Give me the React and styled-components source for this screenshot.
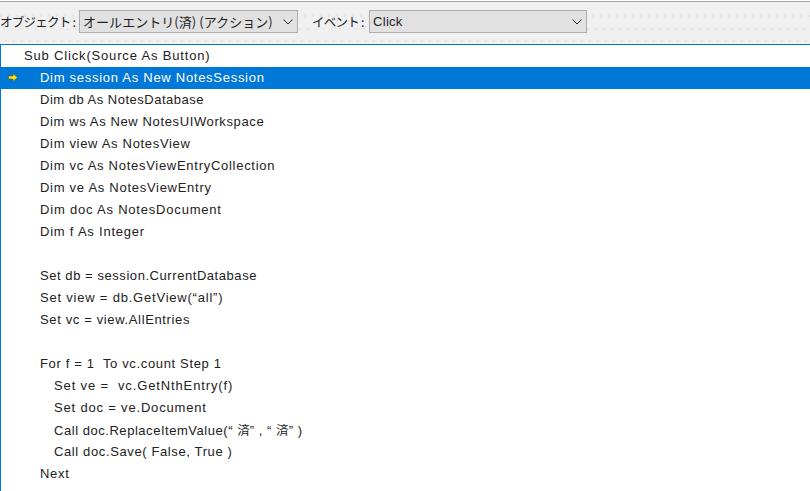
import React from "react";
import styled, { createGlobalStyle } from "styled-components";

const Global = createGlobalStyle`
  html, body { margin: 0; padding: 0; background: #fff; }
  body { width: 810px; height: 491px; overflow: hidden; font-family: "Liberation Sans", "Noto Sans CJK JP", sans-serif; }
`;
const Page = styled.div`
  width: 810px; height: 491px; display: flex; flex-direction: column; overflow: hidden;
  padding-top: 1px; box-sizing: border-box; background: #fff;
`;
const dot = "radial-gradient(circle at 1px 1px, #e4e4e4 0.7px, transparent 1px)";
const Toolbar = styled.div`
  height: 44px; flex: none; box-sizing: border-box; display: flex; align-items: center;
  background-color: #f0f0f0;
  background-image: ${dot}, ${dot}, ${dot};
  background-size: 8px 2px;
  background-repeat: repeat-x;
  background-position: 0 13px, 3px 26px, 5px 38px;
  border-top: 1px solid #a6a6a6; border-bottom: 1px solid #0078d7;
  padding-bottom: 3px; font-size: 13px; color: #222;
`;
const Label = styled.span`
  margin-left: ${p => p.$ml}px; width: ${p => p.$w}px; flex: none; white-space: nowrap;
  font-family: "Noto Sans CJK JP", sans-serif; font-size: 12.5px; letter-spacing: ${p => p.$ls}px;
`;
const Select = styled.div`
  width: ${p => p.$w}px; height: 23px; flex: none; box-sizing: border-box; margin-left: ${p => p.$ml}px;
  display: flex; align-items: center; justify-content: space-between;
  background: #e1e1e1; border: 1px solid #adadad; padding: 0 4px 0 3px; white-space: nowrap;
  font-family: ${p => p.$jp ? '"Noto Sans CJK JP", sans-serif' : '"Liberation Sans", sans-serif'};
  font-size: 13px; letter-spacing: ${p => p.$jp ? "0.05px" : "0.3px"};
`;
const Chevron = () => (
  <svg width="10" height="6" viewBox="0 0 10 6" fill="none" stroke="#222" strokeWidth="1"><path d="M0.5 0.5 L5 5 L9.5 0.5" /></svg>
);
const Editor = styled.div`
  flex: 1; border-left: 1px solid #0078d7; min-height: 0;
`;
const Row = styled.div`
  position: relative; height: 22px; line-height: 22px; box-sizing: border-box;
  padding-left: ${p => p.$indent - 1}px; white-space: pre; font-size: 13px;
  letter-spacing: ${p => p.$track}px;
  color: ${p => p.$sel ? "#fff" : "#222"}; background: ${p => p.$sel ? "#0078d7" : "transparent"};
`;
const Marker = styled.svg`
  position: absolute; left: 7px; top: 6px;
`;
const Jp = styled.span`
  font-family: "Noto Sans CJK JP", sans-serif; font-size: 12.5px; letter-spacing: 0;
`;

const lines = [
  { indent: 24, track: 0.83, text: "Sub Click(Source As Button)" },
  { indent: 40, track: 0.72, text: "Dim session As New NotesSession", sel: true },
  { indent: 40, track: 0.5, text: "Dim db As NotesDatabase" },
  { indent: 40, track: 0.62, text: "Dim ws As New NotesUIWorkspace" },
  { indent: 40, track: 0.68, text: "Dim view As NotesView" },
  { indent: 40, track: 0.72, text: "Dim vc As NotesViewEntryCollection" },
  { indent: 40, track: 0.72, text: "Dim ve As NotesViewEntry" },
  { indent: 40, track: 0.8, text: "Dim doc As NotesDocument" },
  { indent: 40, track: 0.78, text: "Dim f As Integer" },
  { indent: 40, track: 0.7, text: "" },
  { indent: 40, track: 0.56, text: "Set db = session.CurrentDatabase" },
  { indent: 40, track: 0.79, text: "Set view = db.GetView(“all”)" },
  { indent: 40, track: 0.64, text: "Set vc = view.AllEntries" },
  { indent: 40, track: 0.7, text: "" },
  { indent: 40, track: 0.65, text: "For f = 1  To vc.count Step 1" },
  { indent: 54, track: 0.87, text: "Set ve =  vc.GetNthEntry(f)" },
  { indent: 54, track: 0.82, text: "Set doc = ve.Document" },
  { indent: 54, track: 0.54, text: <>Call doc.ReplaceItemValue(“ <Jp>済</Jp>” , “ <Jp>済</Jp>” )</> },
  { indent: 54, track: 0.62, text: "Call doc.Save( False, True )" },
  { indent: 40, track: 0.72, text: "Next" },
];

export default function App() {
  return (
    <Page>
      <Global />
      <Toolbar>
        <Label $ml={0} $w={78} $ls={-0.75}>オブジェクト :</Label>
        <Select $w={219} $ml={1} $jp>
          <span>オールエントリ(済) (アクション)</span>
          <Chevron />
        </Select>
        <Label $ml={14} $w={57} $ls={-0.75}>イベント :</Label>
        <Select $w={218} $ml={0}>
          <span>Click</span>
          <Chevron />
        </Select>
      </Toolbar>
      <Editor>
        {lines.map((l, i) => (
          <Row key={i} $indent={l.indent} $track={l.track} $sel={l.sel}>
            {l.sel && (
              <Marker width="11" height="9" viewBox="0 0 11 9">
                <path d="M0.5 3 H5 V0.8 L9.5 4.5 L5 8.2 V6 H0.5 Z" fill="#ffe81a" stroke="#6b5a00" strokeWidth="0.6" />
              </Marker>
            )}
            {l.text}
          </Row>
        ))}
      </Editor>
    </Page>
  );
}
